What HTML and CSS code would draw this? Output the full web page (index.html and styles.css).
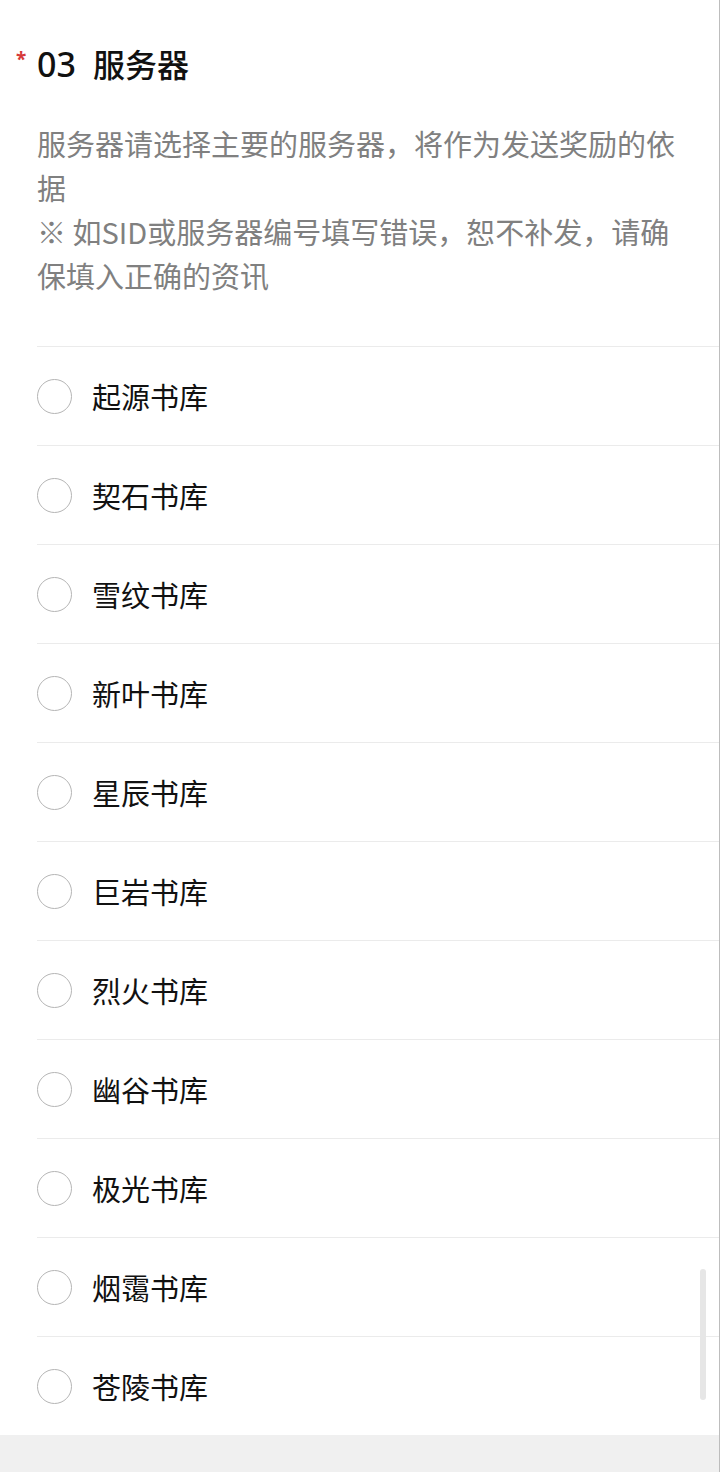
FILE: index.html
```html
<!DOCTYPE html>
<html lang="zh-CN">
<head>
  <meta charset="UTF-8" />
  <meta name="viewport" content="width=device-width, initial-scale=1.0"/>
  <title>服务器</title>
  <link rel="stylesheet" href="styles.css">
</head>
<body>

  <div class="page">
    <div class="question">
      <h2 class="q-title"><span class="required">*</span><span class="q-num">03</span>服务器</h2>
      <p class="q-desc">服务器请选择主要的服务器，将作为发送奖励的依据<br>※ 如SID或服务器编号填写错误，恕不补发，请确保填入正确的资讯</p>

      <ul class="options">
        <li class="option"><span class="radio"></span>起源书库</li>
        <li class="option"><span class="radio"></span>契石书库</li>
        <li class="option"><span class="radio"></span>雪纹书库</li>
        <li class="option"><span class="radio"></span>新叶书库</li>
        <li class="option"><span class="radio"></span>星辰书库</li>
        <li class="option"><span class="radio"></span>巨岩书库</li>
        <li class="option"><span class="radio"></span>烈火书库</li>
        <li class="option"><span class="radio"></span>幽谷书库</li>
        <li class="option"><span class="radio"></span>极光书库</li>
        <li class="option"><span class="radio"></span>烟霭书库</li>
        <li class="option"><span class="radio"></span>苍陵书库</li>
      </ul>
    </div>
    <div class="footer-band"></div>
  </div>

  <div class="scrollbar"></div>

</body>
</html>
```

FILE: styles.css
```css
body {
  margin: 0;
  font-family: "Noto Sans CJK SC", "Noto Sans", sans-serif;
  background-color: #fff;
  color: #111;
}

.page {
  width: 719px;
  min-height: 1472px;
  border-right: 1px solid #bdbdbd;
  display: flex;
  flex-direction: column;
}

.question {
  padding: 36px 0 0 37px;
}

.q-title {
  position: relative;
  margin: 0;
  font-size: 32px;
  font-weight: 500;
  line-height: 54px;
  height: 54px;
}

.required {
  position: absolute;
  left: -21px;
  top: 14px;
  color: #d63a3a;
  font-family: "Noto Sans", sans-serif;
  font-size: 19px;
  line-height: 19px;
  font-weight: 700;
}

.q-num {
  font-family: "Noto Sans", sans-serif;
  font-size: 34px;
  font-weight: 500;
  margin-right: 17px;
}

.q-desc {
  margin: 31px 0 0;
  padding-right: 24px;
  font-size: 29px;
  line-height: 44px;
  color: #808080;
}

.options {
  list-style: none;
  margin: 49px 0 0;
  padding: 0;
}

.option {
  display: flex;
  align-items: center;
  height: 98px;
  border-top: 1px solid #ebebeb;
  font-size: 29px;
  color: #111;
}

.radio {
  width: 33px;
  height: 33px;
  border: 1.5px solid #b5b5b5;
  border-radius: 50%;
  margin-right: 20px;
}

.footer-band {
  flex: 1;
  background-color: #f0f0f0;
}

.scrollbar {
  position: absolute;
  left: 700px;
  top: 1269px;
  width: 6px;
  height: 131px;
  background-color: #e6e6e6;
  border-radius: 3px;
}
```
